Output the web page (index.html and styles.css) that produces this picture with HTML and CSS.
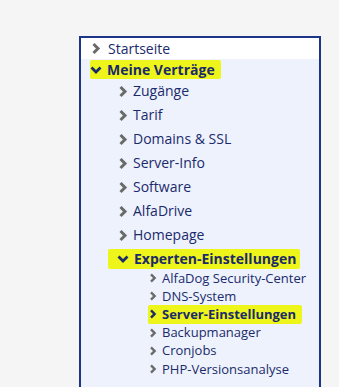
FILE: index.html
```html
<!DOCTYPE html>
<html lang="de">
<head>
    <meta charset="UTF-8">
    <title>Menü</title>
    <link rel="stylesheet" href="styles.css">
</head>
<body>
    <nav class="menu">
        <ul>
            <li class="top">
                <a href="#"><svg class="chev" viewBox="0 0 10 12"><path d="M2.5 1.5 L7 6 L2.5 10.5"/></svg>Startseite</a>
            </li>
            <li class="open">
                <a href="#" class="mark lvl1"><svg class="chev down" viewBox="0 0 12 10"><path d="M1.5 2.5 L6 7 L10.5 2.5"/></svg>Meine Verträge</a>
                <ul class="sub">
                    <li><a href="#"><svg class="chev" viewBox="0 0 10 12"><path d="M2.5 1.5 L7 6 L2.5 10.5"/></svg>Zugänge</a></li>
                    <li><a href="#"><svg class="chev" viewBox="0 0 10 12"><path d="M2.5 1.5 L7 6 L2.5 10.5"/></svg>Tarif</a></li>
                    <li><a href="#"><svg class="chev" viewBox="0 0 10 12"><path d="M2.5 1.5 L7 6 L2.5 10.5"/></svg>Domains &amp; SSL</a></li>
                    <li><a href="#"><svg class="chev" viewBox="0 0 10 12"><path d="M2.5 1.5 L7 6 L2.5 10.5"/></svg>Server-Info</a></li>
                    <li><a href="#"><svg class="chev" viewBox="0 0 10 12"><path d="M2.5 1.5 L7 6 L2.5 10.5"/></svg>Software</a></li>
                    <li><a href="#"><svg class="chev" viewBox="0 0 10 12"><path d="M2.5 1.5 L7 6 L2.5 10.5"/></svg>AlfaDrive</a></li>
                    <li><a href="#"><svg class="chev" viewBox="0 0 10 12"><path d="M2.5 1.5 L7 6 L2.5 10.5"/></svg>Homepage</a></li>
                    <li class="open">
                        <a href="#" class="mark lvl2"><svg class="chev down" viewBox="0 0 12 10"><path d="M1.5 2.5 L6 7 L10.5 2.5"/></svg>Experten-Einstellungen</a>
                        <ul class="sub2">
                            <li><a href="#"><svg class="chev" viewBox="0 0 10 12"><path d="M2.5 1.5 L7 6 L2.5 10.5"/></svg>AlfaDog Security-Center</a></li>
                            <li><a href="#"><svg class="chev" viewBox="0 0 10 12"><path d="M2.5 1.5 L7 6 L2.5 10.5"/></svg>DNS-System</a></li>
                            <li><a href="#" class="mark active"><svg class="chev" viewBox="0 0 10 12"><path d="M2.5 1.5 L7 6 L2.5 10.5"/></svg>Server-Einstellungen</a></li>
                            <li><a href="#"><svg class="chev" viewBox="0 0 10 12"><path d="M2.5 1.5 L7 6 L2.5 10.5"/></svg>Backupmanager</a></li>
                            <li><a href="#"><svg class="chev" viewBox="0 0 10 12"><path d="M2.5 1.5 L7 6 L2.5 10.5"/></svg>Cronjobs</a></li>
                            <li><a href="#"><svg class="chev" viewBox="0 0 10 12"><path d="M2.5 1.5 L7 6 L2.5 10.5"/></svg>PHP-Versionsanalyse</a></li>
                        </ul>
                    </li>
                </ul>
            </li>
        </ul>
    </nav>
</body>
</html>
```

FILE: styles.css
```css
body {
    margin: 0;
    padding: 0;
    background: #f5f5f6;
    font-family: "Open Sans", "Noto Sans", sans-serif;
    color: #1b2a6b;
    overflow: hidden;
}

.menu {
    margin: 36px 0 0 79px;
    width: 238px;
    border: 2px solid #1c3587;
    border-bottom: none;
    background: #edf2fd;
    padding-bottom: 40px;
}

.menu ul {
    list-style: none;
    margin: 0;
    padding: 0;
}

.menu li {
    line-height: 1;
}

.menu a {
    display: flex;
    width: max-content;
    align-items: center;
    text-decoration: none;
    color: #1b2a6b;
}

.top {
    background: #fff;
    height: 21px;
    display: flex;
    align-items: center;
    padding-left: 10px;
    font-size: 14px;
}

.top .chev {
    margin-right: 7px;
}

.chev {
    width: 10px;
    height: 13px;
    flex-shrink: 0;
}

.chev path {
    fill: none;
    stroke: #6a6a6a;
    stroke-width: 3;
    stroke-linejoin: miter;
}

.chev.down {
    width: 12px;
    height: 10px;
}

.chev.down path {
    stroke: #1b2a6b;
    stroke-width: 2.8;
}

.lvl1 {
    font-size: 14px;
    font-weight: bold;
    margin: 1px 0 0 9px;
    height: 19px;
}

.lvl1 .chev {
    margin-right: 5px;
}

.sub {
    margin-top: 4px;
}

.sub > li > a {
    font-size: 14px;
    height: 24px;
    padding-left: 37px;
}

.sub > li > a .chev {
    margin-right: 5px;
}

.sub > li > a.lvl2 {
    font-weight: bold;
    margin-left: 27px;
    padding: 0 4px 0 9px;
    height: 20px;
    margin-top: 2px;
}

.lvl2 .chev {
    margin-right: 4px;
}

.sub2 {
    margin-top: 3px;
}

.sub2 a {
    font-size: 13px;
    height: 18.2px;
    padding-left: 68px;
}

.sub2 .chev {
    width: 8px;
    height: 10px;
    margin-right: 5px;
}

.sub2 a.mark {
    font-weight: bold;
    margin-left: 67px;
    padding: 0 6px 0 1px;
}

.sub2 .active .chev path {
    stroke: #1b2a6b;
}

.mark {
    background: #eef51b;
    border-radius: 2px;
    padding-right: 6px;
}
```
